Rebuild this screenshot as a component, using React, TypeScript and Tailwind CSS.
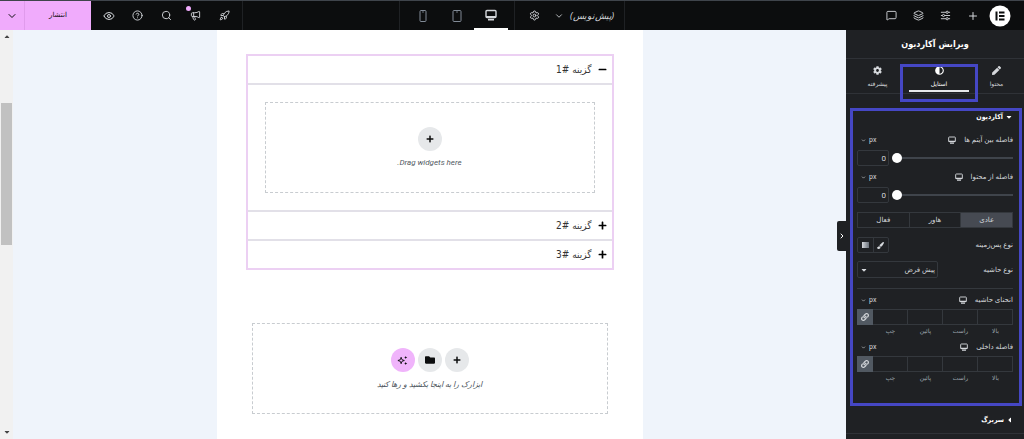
import { useState } from "react"
import {
  ChevronDown,
  CircleHelp,
  Eye,
  Layers,
  Megaphone,
  MessageSquare,
  Plus,
  Rocket,
  Search,
  Settings,
} from "lucide-react"
import {
  FaAdjust,
  FaCaretDown,
  FaCog,
  FaFolder,
  FaLink,
  FaMinus,
  FaPaintBrush,
  FaPen,
  FaPlus,
} from "react-icons/fa"

const DesktopIcon = ({ className }: { className?: string }) => (
  <svg viewBox="0 0 12 12" className={className} fill="none" stroke="currentColor">
    <rect x="1" y="1.5" width="10" height="7" rx="1" strokeWidth="1.4" />
    <path d="M1 8h10M3 10.6h6" strokeWidth="1.8" />
  </svg>
)

const DeviceIcon = ({ width }: { width: number }) => (
  <svg
    viewBox="0 0 12 14"
    className="h-[14px] w-3"
    fill="none"
    stroke="currentColor"
  >
    <rect x={6 - width / 2} y="1.5" width={width} height="11" rx="1" />
    <path d="M5 3h2" strokeWidth="0.8" />
  </svg>
)

const SlidersIcon = () => (
  <svg
    viewBox="0 0 12 12"
    className="size-[11px]"
    fill="none"
    stroke="currentColor"
  >
    <path d="M1 2.5h5.5M9 2.5h2M1 6h1.5M5 6h6M1 9.5h5.5M9 9.5h2" />
    <circle cx="7.8" cy="2.5" r="1.2" />
    <circle cx="3.8" cy="6" r="1.2" />
    <circle cx="7.8" cy="9.5" r="1.2" />
  </svg>
)

const SparkleIcon = () => (
  <svg viewBox="0 0 12 12" className="size-[11px]" fill="none" stroke="currentColor">
    <path d="M4.5 2.5 5.4 5.1 8 6 5.4 6.9 4.5 9.5 3.6 6.9 1 6l2.6-.9z" />
    <path
      d="M9.500 1l.5 1.200 1.200.5-1.200.5-.5 1.200-.5-1.200-1.200-.5 1.200-.5zM9.500 7.500l.5 1.200 1.200.5-1.200.5-.5 1.200-.5-1.200-1.200-.5 1.200-.5z"
      fill="currentColor"
      stroke="none"
    />
  </svg>
)

const TopBar = () => {
  const panelButton = "flex w-[27px] items-center justify-center"
  const toolButton = "flex w-[29px] items-center justify-center"
  return (
    <header className="grid h-[30px] shrink-0 grid-cols-[1fr_auto_1fr] border-t border-[#3f444b] bg-[#0c0d0e] text-[#d5d8dc]">
      <div className="flex pr-[13px]">
        <button type="button" title="Menu" className="ml-[3px] flex items-center">
          <svg viewBox="0 0 22 22" className="size-[22px]">
            <circle cx="11" cy="11" r="10.500" fill="#fff" />
            <path
              d="M6.500 6.500h2v9h-2zM10 6.500h5.500v2H10zM10 10h5.500v2H10zM10 13.500h5.500v2H10z"
              fill="#0c0d0e"
            />
          </svg>
        </button>
        <button type="button" title="Add element" className={panelButton}>
          <Plus className="size-3" />
        </button>
        <button type="button" title="Site settings" className={panelButton}>
          <SlidersIcon />
        </button>
        <button type="button" title="Structure" className={panelButton}>
          <Layers className="size-[11px]" />
        </button>
        <button type="button" title="Notes" className={panelButton}>
          <MessageSquare className="size-[11px]" />
        </button>
      </div>

      <div className="flex border-x border-[#1f2124]">
        <button
          type="button"
          className="flex items-center gap-1.5 pr-2.5 text-[9px] italic"
        >
          (پیش‌نویس)
          <ChevronDown className="size-2.5" />
        </button>
        <button
          type="button"
          title="Page settings"
          className="flex w-10 items-center justify-center border-l border-[#1f2124]"
        >
          <Settings className="size-[11px]" />
        </button>
        <div className="flex pr-1.5 pl-1.5">
          <button
            type="button"
            title="Desktop"
            className="flex w-[34px] items-center justify-center border-b-2 border-white"
          >
            <DesktopIcon className="size-3" />
          </button>
          <button
            type="button"
            title="Tablet"
            className="flex w-[34px] items-center justify-center text-[#818a96]"
          >
            <DeviceIcon width={8} />
          </button>
          <button
            type="button"
            title="Mobile"
            className="flex w-[34px] items-center justify-center text-[#818a96]"
          >
            <DeviceIcon width={6} />
          </button>
        </div>
      </div>

      <div className="flex justify-end">
        <div className="flex border-r border-[#1f2124] px-[3px]">
          <button type="button" title="Checklist" className={toolButton}>
            <Rocket className="size-[11px]" />
          </button>
          <button type="button" title="What's new" className={toolButton}>
            <span className="relative">
              <Megaphone className="size-[11px]" />
              <span className="absolute -top-1 -left-1 size-[5px] rounded-full bg-[#f0abfc]" />
            </span>
          </button>
          <button type="button" title="Finder" className={toolButton}>
            <Search className="size-[11px]" />
          </button>
          <button type="button" title="Help" className={toolButton}>
            <CircleHelp className="size-[11px]" />
          </button>
          <button type="button" title="Preview" className={toolButton}>
            <Eye className="size-3" />
          </button>
        </div>
        <button
          type="button"
          className="w-[66px] bg-[#f0abfc] text-[7px] text-[#0c0d0e]"
        >
          انتشار
        </button>
        <button
          type="button"
          title="Save options"
          className="flex w-[25px] items-center justify-center border-r border-[#e09bec] bg-[#f0abfc] text-[#0c0d0e]"
        >
          <ChevronDown className="size-3" />
        </button>
      </div>
    </header>
  )
}

const Units = () => (
  <button
    type="button"
    dir="ltr"
    className="mr-auto flex w-8 items-center gap-[3px] pl-1 font-[family-name:Roboto] text-[7px]"
  >
    <ChevronDown className="size-[5px]" strokeWidth={3} />
    px
  </button>
)

const ControlLabel = ({ label }: { label: string }) => (
  <div className="flex h-4 items-center gap-2">
    <span>{label}</span>
    <DesktopIcon className="size-2" />
    <Units />
  </div>
)

const SliderControl = ({ label }: { label: string }) => {
  const [value, setValue] = useState(0)
  return (
    <div className="h-[37px]">
      <ControlLabel label={label} />
      <div dir="ltr" className="mt-0.5 flex items-center gap-[3px]">
        <input
          type="text"
          aria-label={label}
          value={value}
          onChange={(e) => setValue(Number(e.target.value) || 0)}
          className="h-4 w-8 rounded-[2px] border border-[#34383d] pr-0.5 text-right font-[family-name:Roboto] text-[8px]"
        />
        <input
          type="range"
          aria-label={label}
          value={value}
          onChange={(e) => setValue(Number(e.target.value))}
          className="h-0.5 min-w-0 flex-1 appearance-none bg-[#3f444b] [&::-webkit-slider-thumb]:size-2.5 [&::-webkit-slider-thumb]:appearance-none [&::-webkit-slider-thumb]:rounded-full [&::-webkit-slider-thumb]:bg-white"
        />
      </div>
    </div>
  )
}

const sides = ["بالا", "راست", "پائین", "چپ"]

const DimensionsControl = ({ label }: { label: string }) => (
  <div className="h-[47px]">
    <ControlLabel label={label} />
    <div className="mt-[1px] flex">
      {sides.map((side) => (
        <label
          key={side}
          className="flex min-w-0 flex-1 flex-col items-center text-[6px] text-[#9da5ae]"
        >
          <input
            type="text"
            className="h-4 w-full border border-l-0 border-[#34383d]"
          />
          <span className="mt-0.5 leading-2">{side}</span>
        </label>
      ))}
      <button
        type="button"
        title="Link values"
        className="flex h-4 w-4 items-center justify-center bg-[#515962]"
      >
        <FaLink className="size-2" />
      </button>
    </div>
  </div>
)

const states = ["عادی", "هاور", "فعال"]

const StyleSection = () => {
  const [active, setActive] = useState("عادی")
  return (
    <section className="mt-[14px] mr-0.5 ml-1 h-[298px] border-3 border-[#4547c4] pr-1.5 pl-1">
      <button
        type="button"
        className="flex h-3 w-full items-center gap-0.5 font-['DejaVu_Sans_Condensed','DejaVu_Sans',sans-serif] text-[7px] font-bold text-white"
      >
        <FaCaretDown className="size-2" />
        آکاردیون
      </button>
      <div className="mt-[9px]">
        <SliderControl label="فاصله بین آیتم ها" />
        <SliderControl label="فاصله از محتوا" />
      </div>
      <div className="mt-[6px] flex h-4 border border-[#34383d]">
        {states.map((state) => (
          <button
            key={state}
            type="button"
            onClick={() => setActive(state)}
            className={
              state === active
                ? "flex-1 bg-[#464a52] leading-3"
                : "flex-1 border-r border-[#34383d] leading-3"
            }
          >
            {state}
          </button>
        ))}
      </div>
      <div className="mt-[9px] flex h-4 items-center justify-between">
        <span>نوع پس‌زمینه</span>
        <div className="flex h-4 w-8 rounded-[2px] border border-[#34383d]">
          <button
            type="button"
            title="Classic"
            className="flex flex-1 items-center justify-center"
          >
            <FaPaintBrush className="size-[7px]" />
          </button>
          <button
            type="button"
            title="Gradient"
            className="flex flex-1 items-center justify-center border-r border-[#34383d]"
          >
            <span className="h-[6px] w-[7px] bg-linear-to-r from-[#d5d8dc] to-[#6b727b]" />
          </button>
        </div>
      </div>
      <div className="mt-2 flex h-[17px] items-center justify-between">
        <label htmlFor="border-type">نوع حاشیه</label>
        <div className="flex h-[17px] w-[81px] items-center rounded-[2px] border border-[#34383d]">
          <select
            id="border-type"
            className="h-full min-w-0 flex-1 appearance-none pr-0.5"
          >
            <option>پیش فرض</option>
          </select>
          <FaCaretDown className="pointer-events-none ml-0.5 size-2 shrink-0" />
        </div>
      </div>
      <div className="mt-[10px] border-t border-[#34383d] pt-[3px]">
        <DimensionsControl label="انحنای حاشیه" />
        <DimensionsControl label="فاصله داخلی" />
      </div>
    </section>
  )
}

const Panel = () => (
  <aside className="w-[178px] shrink-0 bg-[#1f2124] text-[7px] leading-3 text-[#d5d8dc]">
    <h1 className="h-[29px] border-b border-[#2f3237] text-center font-['DejaVu_Sans_Condensed','DejaVu_Sans',sans-serif] text-[9px] leading-7 font-bold text-white">
      ویرایش آکاردیون
    </h1>
    <nav className="flex h-[35px] border-b border-[#2f3237] text-[6px] leading-2">
      <button
        type="button"
        className="flex w-[55px] flex-col items-center pt-[7px]"
      >
        <FaPen className="mb-[5px] size-[9px] shrink-0" />
        محتوا
      </button>
      <button
        type="button"
        className="relative flex w-[60px] flex-col items-center pt-[7px] text-white"
      >
        <FaAdjust className="mb-[5px] size-[9px] shrink-0" />
        استایل
        <span className="mt-0.5 h-0.5 w-full shrink-0 bg-[#e6e8ea]" />
        <span className="pointer-events-none absolute inset-x-[-9px] top-[5px] h-[38px] border-3 border-[#4547c4]" />
      </button>
      <button
        type="button"
        className="flex flex-1 flex-col items-center pt-[7px]"
      >
        <FaCog className="mb-[5px] size-[9px] shrink-0" />
        پیشرفته
      </button>
    </nav>
    <StyleSection />
    <button
      type="button"
      className="flex h-[28px] w-full items-center gap-0.5 border-b border-[#2f3237] pr-2.5 font-['DejaVu_Sans_Condensed','DejaVu_Sans',sans-serif] font-bold text-white"
    >
      <FaCaretDown className="size-2 rotate-90" />
      سربرگ
    </button>
  </aside>
)

const roundButton =
  "flex size-6 items-center justify-center rounded-full text-[#0c0d0e]"

const AccordionItem = ({ title, open }: { title: string; open?: boolean }) => (
  <div className="border-t-2 border-[#e2e0e8] first:border-t-0">
    <button
      type="button"
      className="flex h-[27px] w-full items-center gap-1.5 pr-[5px] font-['DejaVu_Sans_Condensed','DejaVu_Sans',sans-serif] text-[10px] text-[#333]"
    >
      {open ? (
        <FaMinus className="size-[9px] text-black" />
      ) : (
        <FaPlus className="size-[9px] text-black" />
      )}
      {title}
    </button>
    {open && (
      <div className="border-t-2 border-[#e2e0e8] p-[17px]">
        <div className="flex h-[91px] flex-col items-center border border-dashed border-[#c8ccd0] pt-6">
          <button
            type="button"
            title="Add widget"
            className={`${roundButton} bg-[#e6e8ea]`}
          >
            <FaPlus className="size-2" />
          </button>
          <p className="mt-1.5 font-[family-name:Roboto] text-[8px] leading-3 text-[#515962] italic">
            Drag widgets here.
          </p>
        </div>
      </div>
    )}
  </div>
)

const Canvas = () => (
  <main className="relative flex flex-1 justify-center bg-[#eff4fb]">
    <div className="w-[426px] bg-white px-[29px] pt-6">
      <div className="border-2 border-[#ecd0f3]">
        <AccordionItem title="گزینه #1" open />
        <AccordionItem title="گزینه #2" />
        <AccordionItem title="گزینه #3" />
      </div>
      <div className="mx-1.5 mt-[53px] flex h-[91px] flex-col items-center border border-dashed border-[#c8ccd0] pt-6">
        <div className="flex gap-[3px]">
          <button
            type="button"
            title="Add container"
            className={`${roundButton} bg-[#e6e8ea]`}
          >
            <FaPlus className="size-2" />
          </button>
          <button
            type="button"
            title="Add template"
            className={`${roundButton} bg-[#e6e8ea]`}
          >
            <FaFolder className="size-2.5" />
          </button>
          <button
            type="button"
            title="Build with AI"
            className={`${roundButton} bg-[#f0b4fb]`}
          >
            <SparkleIcon />
          </button>
        </div>
        <p className="mt-1.5 text-[8px] leading-3 text-[#515962] italic">
          ابزارک را به اینجا بکشید و رها کنید
        </p>
      </div>
    </div>
    <button
      type="button"
      title="Hide panel"
      className="absolute top-[191px] right-0 flex h-[30px] w-[9px] items-center justify-center rounded-l-[2px] bg-[#1f2124] text-white"
    >
      <ChevronDown className="size-2 -rotate-90" strokeWidth={3} />
    </button>
  </main>
)

const ScrollBar = () => (
  <div className="flex w-[13px] shrink-0 flex-col items-center bg-[#f1f1f1] py-[3px] text-[#444]">
    <FaCaretDown className="size-2 rotate-180" />
    <div className="mt-[62px] h-[142px] w-[11px] bg-[#c1c1c1]" />
    <FaCaretDown className="mt-auto size-2" />
  </div>
)

export default function App() {
  return (
    <div
      dir="rtl"
      className="flex min-h-screen flex-col font-['Noto_Sans','DejaVu_Sans',sans-serif]"
    >
      <TopBar />
      <div className="flex flex-1">
        <Panel />
        <Canvas />
        <ScrollBar />
      </div>
    </div>
  )
}
